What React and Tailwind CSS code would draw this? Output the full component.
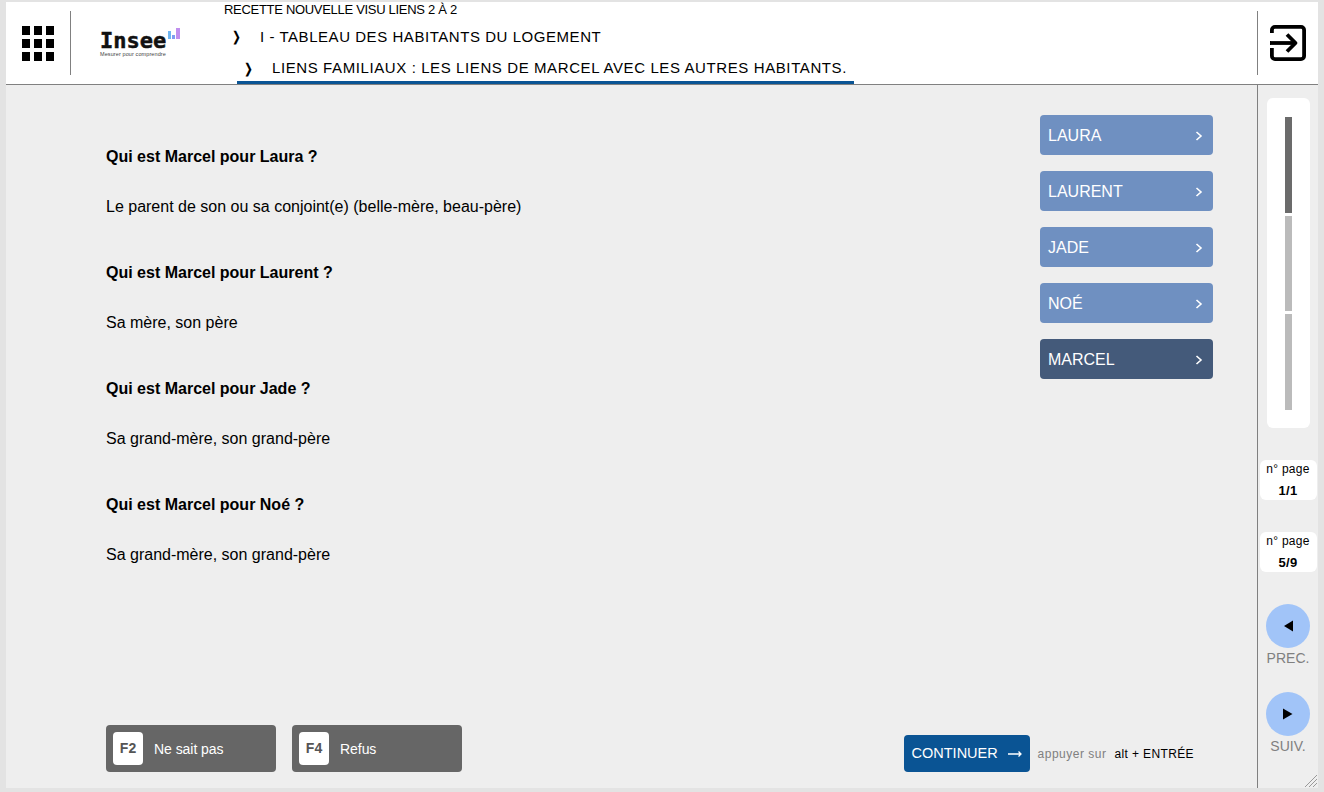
import { useState } from "react";

const answers = [
  { name: "Laura", answer: "Le parent de son ou sa conjoint(e) (belle-mère, beau-père)" },
  { name: "Laurent", answer: "Sa mère, son père" },
  { name: "Jade", answer: "Sa grand-mère, son grand-père" },
  { name: "Noé", answer: "Sa grand-mère, son grand-père" },
];

const people = ["LAURA", "LAURENT", "JADE", "NOÉ", "MARCEL"];

function AppsIcon() {
  return (
    <div className="grid grid-cols-3 gap-[4px]">
      {Array.from({ length: 9 }).map((_, i) => (
        <span key={i} className="block h-[9px] w-[8px] bg-black" />
      ))}
    </div>
  );
}

function Logo() {
  return (
    <div className="relative w-[82px]">
      <div className="text-[22px] leading-[22px] font-bold text-[#111] [-webkit-text-stroke:0.5px_#111] font-['DejaVu_Sans_Mono',monospace]">Insee</div>
      <div className="absolute left-[68px] top-[-3px] flex h-[12px] items-end gap-[1px]">
        <span className="h-[8px] w-[3px] bg-[#6fb6f2]" />
        <span className="h-[4px] w-[3px] bg-[#7f9cf0]" />
        <span className="h-[11px] w-[4px] bg-[#c08fee]" />
      </div>
      <div className="mt-[-1px] whitespace-nowrap text-[5.5px] leading-[6px] tracking-[0.1px] text-[#444]">Mesurer pour comprendre</div>
    </div>
  );
}

function ExitIcon() {
  return (
    <svg width="36" height="36" viewBox="0 0 36 36" fill="none" stroke="black" strokeWidth="3.8" strokeLinejoin="round">
      <path d="M1.900 8V5a3.100 3.100 0 0 1 3.100-3.100h26a3.100 3.100 0 0 1 3.100 3.100v26a3.100 3.100 0 0 1-3.100 3.100H5A3.100 3.100 0 0 1 1.900 31v-8" />
      <path d="M0 18h25" />
      <path d="M17 9.500l8.500 8.500-8.500 8.500" />
    </svg>
  );
}

function Chevron() {
  return (
    <svg width="8" height="10" viewBox="0 0 8 10" fill="none" stroke="white" strokeWidth="1.6">
      <path d="M1.500 1l4.500 4-4.500 4" />
    </svg>
  );
}

function PageBox({ value }) {
  return (
    <div className="flex h-[40px] w-[57px] flex-col items-center rounded-[6px] bg-white pt-[2px] text-[12px] leading-[14px] tracking-[0.3px] text-black">
      <span>n° page</span>
      <span className="mt-[8px] text-[13px] font-bold">{value}</span>
    </div>
  );
}

function RoundNav({ label, dir }) {
  return (
    <div className="flex flex-col items-center">
      <button className="flex h-[44px] w-[44px] items-center justify-center rounded-full bg-[#a1c4f8]">
        <svg width="10" height="12" viewBox="0 0 10 12" fill="black">
          {dir === "prev" ? <path d="M10 0.500v11L1 6z" /> : <path d="M0 0.500v11L9.500 6z" />}
        </svg>
      </button>
      <span className="mt-[2px] text-[14px] leading-[16px] text-[#808080]">{label}</span>
    </div>
  );
}

function KeyButton({ fkey, label }) {
  return (
    <button className="flex h-[47px] w-[170px] items-center gap-[11px] rounded-[4px] bg-[#666666] pl-[7px] text-[14px] text-white">
      <span className="flex h-[33px] w-[30px] items-center justify-center rounded-[4px] bg-white font-bold text-[#555]">{fkey}</span>
      <span className="pt-[1px] tracking-[-0.05px]">{label}</span>
    </button>
  );
}

export default function App() {
  const [current] = useState("MARCEL");

  return (
    <div className="flex h-screen flex-col overflow-hidden bg-[#e3e3e3] pb-[4px] pl-[6px] pr-[6px] pt-[2px] font-['Liberation_Sans',Arial,sans-serif]">
      <header className="flex h-[83px] shrink-0 border-b border-[#808080] bg-white">
        <div className="flex w-[65px] items-center">
          <div className="flex h-[64px] w-full items-center justify-center border-r border-[#808080] pr-[1px] pt-[1px]">
            <AppsIcon />
          </div>
        </div>
        <div className="flex w-[153px] items-center pl-[29px]">
          <Logo />
        </div>
        <div className="flex-1 text-black">
          <div className="h-[14px] whitespace-nowrap pt-[1px] text-[13px] leading-[14px] tracking-[-0.3px]">RECETTE NOUVELLE VISU LIENS 2 À 2</div>
          <div className="mt-[11px] flex h-[20px] items-center pl-[7px] text-[15px] tracking-[0.55px]">
            <span className="w-[29px] text-[13px] font-bold">❭</span>
            <span>I - TABLEAU DES HABITANTS DU LOGEMENT</span>
          </div>
          <div className="ml-[13px] mt-[8px] flex h-[29px] w-[617px] items-center border-b-[3px] border-[#0a5494] pl-[6px] pt-[1px] text-[15px] tracking-[0.6px]">
            <span className="w-[29px] text-[13px] font-bold">❭</span>
            <span className="whitespace-nowrap">LIENS FAMILIAUX : LES LIENS DE MARCEL AVEC LES AUTRES HABITANTS.</span>
          </div>
        </div>
        <div className="flex w-[61px] shrink-0 items-center">
          <div className="flex h-[64px] w-full items-center border-l border-[#808080] pl-[12px]">
            <ExitIcon />
          </div>
        </div>
      </header>

      <div className="flex min-h-0 flex-1 bg-[#eeeeee]">
        <main className="flex min-w-0 flex-1 flex-col pl-[100px]">
          <div className="flex flex-1 items-start justify-between pr-[44px] pt-[30px]">
            <div className="pt-[33px] text-[16px] text-black">
              {answers.map((a) => (
                <div key={a.name} className="h-[116px]">
                  <p className="h-[18px] leading-[18px] font-bold">Qui est Marcel pour {a.name} ?</p>
                  <p className="mt-[32px] leading-[18px]">{a.answer}</p>
                </div>
              ))}
            </div>
            <nav className="flex w-[173px] flex-col gap-[16px]">
              {people.map((p) => (
                <button
                  key={p}
                  className={`flex h-[40px] items-center justify-between rounded-[4px] pl-[8px] pr-[10px] pt-[1px] text-[16px] text-white ${
                    p === current ? "bg-[#445a7a]" : "bg-[#6f90c1]"
                  }`}
                >
                  {p}
                  <Chevron />
                </button>
              ))}
            </nav>
          </div>
          <div className="flex items-end justify-between pb-[16px] pr-[63px]">
            <div className="flex gap-[16px]">
              <KeyButton fkey="F2" label="Ne sait pas" />
              <KeyButton fkey="F4" label="Refus" />
            </div>
            <div className="flex items-center">
              <button className="flex h-[37px] w-[126px] items-center gap-[10px] rounded-[4px] bg-[#0a5494] pl-[8px] text-[14.5px] text-white">
                CONTINUER
                <svg width="14" height="8" viewBox="0 0 14 8" fill="none" stroke="white" strokeWidth="1.300">
                  <path d="M0 4h13M10.500 1.500L13 4l-2.500 2.500" />
                </svg>
              </button>
              <span className="ml-[8px] text-[12px] tracking-[0.5px] text-[#808080]">appuyer sur</span>
              <span className="ml-[8px] text-[12px] tracking-[0.38px] text-black">alt + ENTRÉE</span>
            </div>
          </div>
        </main>

        <aside className="relative flex w-[61px] shrink-0 flex-col items-center border-l border-[#808080] pt-[13px]">
          <div className="flex h-[330px] w-[43px] flex-col items-center gap-[3px] rounded-[6px] bg-white pt-[19px]">
            <span className="h-[96px] w-[7px] bg-[#6b6b6b]" />
            <span className="h-[95px] w-[7px] bg-[#bbbbbb]" />
            <span className="h-[96px] w-[7px] bg-[#bbbbbb]" />
          </div>
          <div className="mt-[32px]"><PageBox value="1/1" /></div>
          <div className="mt-[32px]"><PageBox value="5/9" /></div>
          <div className="mt-[32px]"><RoundNav label="PREC." dir="prev" /></div>
          <div className="mt-[26px]"><RoundNav label="SUIV." dir="next" /></div>
          <svg className="absolute bottom-0 right-0" width="14" height="14" viewBox="0 0 14 14" stroke="#999" strokeWidth="1">
            <path d="M13 1L1 13M13 5L5 13M13 9L9 13" />
          </svg>
        </aside>
      </div>
    </div>
  );
}
